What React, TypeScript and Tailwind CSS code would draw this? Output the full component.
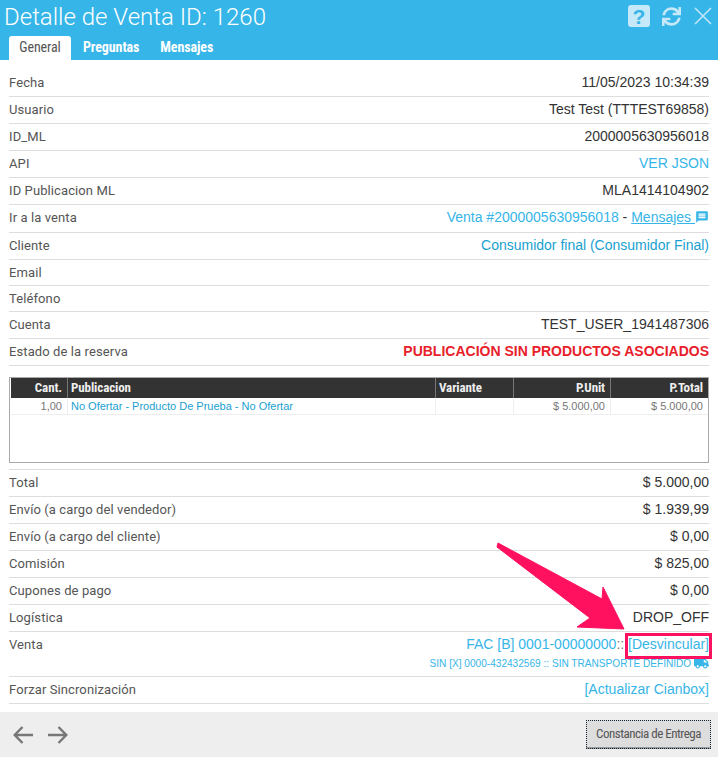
import { FaSync, FaTruck } from 'react-icons/fa';
import { MdMessage } from 'react-icons/md';
import type { ReactNode } from 'react';

const Row = ({ label, children, h = 'h-[27px]' }: { label: string; children?: ReactNode; h?: string }) => (
  <div className={`flex justify-between border-b border-[#ddd] ${h}`}>
    <span className="font-['Roboto',sans-serif] text-[13px] leading-[25px] tracking-[0.1px] text-[#555]">{label}</span>
    <div className="text-right font-['Liberation_Sans',sans-serif] text-[14px] leading-[25px] text-[#333]">{children}</div>
  </div>
);

const cols = 'grid grid-cols-[56px_368px_78px_97px_99px]';
const headCell = 'border-l border-[#777] pl-[3px] pr-[5px] text-[13px] font-bold leading-[20px] tracking-[-0.1px] text-[#eee] font-stretch-condensed';
const bodyCell = "border-l border-[#eee] pl-[3px] pr-[5px] text-[11px] leading-[16px] font-['Liberation_Sans',sans-serif]";

const App = () => {
  return (
    <div className="relative flex h-[757px] w-[718px] flex-col overflow-hidden bg-white font-['Roboto',sans-serif]">
      <header className="relative h-[60px] bg-[#36b5e8] pl-[9px]">
        <h1 className="-ml-[5px] pt-[1px] text-[24px] font-light leading-[32px] text-white">
          Detalle de Venta ID: 1260
        </h1>
        <nav className="mt-[3px] flex h-[24px] text-[14px] font-bold leading-[23px] tracking-[-0.1px] font-stretch-condensed">
          <span className="w-[62px] rounded-t-[3px] bg-white text-center font-normal text-[#555]">General</span>
          <span className="ml-[12px] text-white">Preguntas</span>
          <span className="ml-[21px] text-white">Mensajes</span>
        </nav>
        <div className="absolute left-[628px] top-[5px] flex items-center text-[#c5e9f8]">
          <span className="flex h-[22px] w-[22px] items-center justify-center rounded-[3px] bg-[#c5e9f8] font-['Liberation_Sans',sans-serif] text-[21px] font-bold leading-none text-[#36b5e8]">?</span>
          <FaSync className="ml-[12px] h-[19px] w-[19px]" />
          <svg viewBox="0 0 18 18" className="ml-[13px] h-[18px] w-[18px]" fill="none" stroke="currentColor" strokeWidth="1.5">
            <path d="M1 1L17 17M17 1L1 17" />
          </svg>
        </div>
      </header>

      <main className="flex-1 px-[9px] pt-[10px]">
        <Row label="Fecha">11/05/2023 10:34:39</Row>
        <Row label="Usuario">Test Test (TTTEST69858)</Row>
        <Row label="ID_ML">2000005630956018</Row>
        <Row label="API"><span className="text-[#36b5e8]">VER JSON</span></Row>
        <Row label="ID Publicacion ML">MLA1414104902</Row>
        <Row label="Ir a la venta" h="h-[28px]">
          <span className="text-[#36b5e8]">Venta #2000005630956018</span> -{' '}
          <span className="text-[#36b5e8] underline">Mensajes </span>
          <MdMessage className="inline-block h-[14px] w-[14px] -translate-y-[1px] text-[#36b5e8]" />
        </Row>
        <Row label="Cliente"><span className="text-[#1a9fd0]">Consumidor final (Consumidor Final)</span></Row>
        <Row label="Email" h="h-[26px]" />
        <Row label="Teléfono" h="h-[26px]" />
        <Row label="Cuenta">TEST_USER_1941487306</Row>
        <Row label="Estado de la reserva">
          <span className="font-bold text-[#e8202a]">PUBLICACIÓN SIN PRODUCTOS ASOCIADOS</span>
        </Row>

        <div className="mt-[11px] h-[86px] border border-[#aaa] pl-[1px]">
          <div className={`${cols} bg-[#333]`}>
            <div className={`${headCell} border-l-0 text-right`}>Cant.</div>
            <div className={headCell}>Publicacion</div>
            <div className={headCell}>Variante</div>
            <div className={`${headCell} text-right`}>P.Unit</div>
            <div className={`${headCell} pr-[6px] text-right`}>P.Total</div>
          </div>
          <div className={`${cols} border-b border-[#eee] text-[#777]`}>
            <div className={`${bodyCell} border-l-0 text-right`}>1,00</div>
            <div className={`${bodyCell} text-[#1a9fd0]`}>No Ofertar - Producto De Prueba - No Ofertar</div>
            <div className={bodyCell} />
            <div className={`${bodyCell} text-right`}>$ 5.000,00</div>
            <div className={`${bodyCell} pr-[6px] text-right`}>$ 5.000,00</div>
          </div>
        </div>

        <div className="mt-[6px] border-t border-[#ddd]">
          <Row label="Total">$ 5.000,00</Row>
          <Row label="Envío (a cargo del vendedor)">$ 1.939,99</Row>
          <Row label="Envío (a cargo del cliente)">$ 0,00</Row>
          <Row label="Comisión">$ 825,00</Row>
          <Row label="Cupones de pago">$ 0,00</Row>
          <Row label="Logística">DROP_OFF</Row>
          <Row label="Venta" h="h-[45px]">
            <div className="text-[#36b5e8]">
              FAC [B] 0001-00000000<span className="text-[#777]">::</span> [Desvincular]
            </div>
            <div className="-mt-[1px] text-[10.1px] leading-[14px] text-[#36b5e8]">
              SIN [X] 0000-432432569 :: SIN TRANSPORTE DEFINIDO <FaTruck className="inline-block h-[13px] w-[15px] align-[-2px]" />
            </div>
          </Row>
          <Row label="Forzar Sincronización"><span className="text-[#36b5e8]">[Actualizar Cianbox]</span></Row>
        </div>
      </main>

      <footer className="flex h-[45px] items-center justify-between bg-[#eee] pl-[13px] pr-[7px] text-[#777]">
        <div className="flex gap-[15px]">
          <svg viewBox="0 0 20 18" className="h-[18px] w-[20px]" fill="none" stroke="currentColor" strokeWidth="2.4">
            <path d="M20 9H2M9.5 1L1.7 9L9.5 17" />
          </svg>
          <svg viewBox="0 0 20 18" className="h-[18px] w-[20px]" fill="none" stroke="currentColor" strokeWidth="2.4">
            <path d="M0 9H18M10.5 1L18.3 9L10.5 17" />
          </svg>
        </div>
        <button className="h-[29px] w-[125px] border-b-2 border-[#999] bg-[#ddd] text-[13px] tracking-[-0.5px] text-[#555] font-stretch-condensed outline-1 outline-offset-[-1px] outline-dotted outline-[#123]">
          Constancia de Entrega
        </button>
      </footer>

      <div className="absolute left-[625px] top-[633px] h-[26px] w-[87px] border-[3px] border-[#ff1160]" />
      <svg className="pointer-events-none absolute left-0 top-0 h-[757px] w-[718px]" viewBox="0 0 718 757">
        <polygon points="498,543 602,599 603,587 624,629 577,627 590,618 497,547" fill="#ff1160" stroke="#ff1160" strokeWidth="1" strokeLinejoin="round" />
      </svg>
    </div>
  );
};

export default App;
